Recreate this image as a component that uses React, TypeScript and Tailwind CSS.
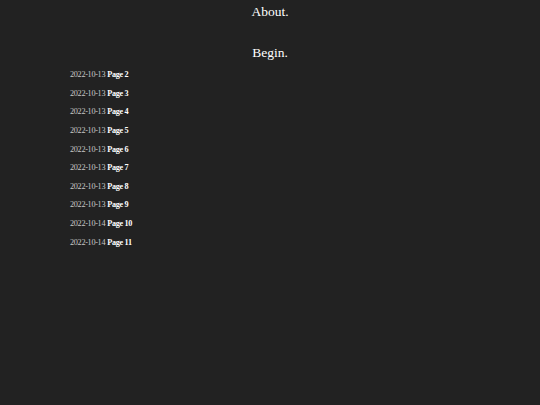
const pages = [
  { date: "2022-10-13", title: "Page 2" },
  { date: "2022-10-13", title: "Page 3" },
  { date: "2022-10-13", title: "Page 4" },
  { date: "2022-10-13", title: "Page 5" },
  { date: "2022-10-13", title: "Page 6" },
  { date: "2022-10-13", title: "Page 7" },
  { date: "2022-10-13", title: "Page 8" },
  { date: "2022-10-13", title: "Page 9" },
  { date: "2022-10-14", title: "Page 10" },
  { date: "2022-10-14", title: "Page 11" },
];

export default function App() {
  return (
    <div
      className="min-h-[405px] w-full bg-[#222222] text-white"
      style={{ fontFamily: '"Liberation Serif", "Times New Roman", serif' }}
    >
      <header className="pt-[3px] text-center text-[13.5px] leading-[18px]">
        <a href="#">About.</a>
      </header>

      <main className="pt-[23px]">
        <h1 className="text-center text-[13.5px] leading-[18px]">Begin.</h1>

        <ul className="mt-[7px] flex flex-col gap-[7.65px] pl-[70px]">
          {pages.map((p) => (
            <li key={p.title} className="flex items-baseline gap-[2px] text-[8.2px] leading-[11px] tracking-[-0.3px]">
              <span className="text-[#c8c8c8]">{p.date}</span>
              <a href="#" className="font-bold text-white">
                {p.title}
              </a>
            </li>
          ))}
        </ul>
      </main>
    </div>
  );
}
